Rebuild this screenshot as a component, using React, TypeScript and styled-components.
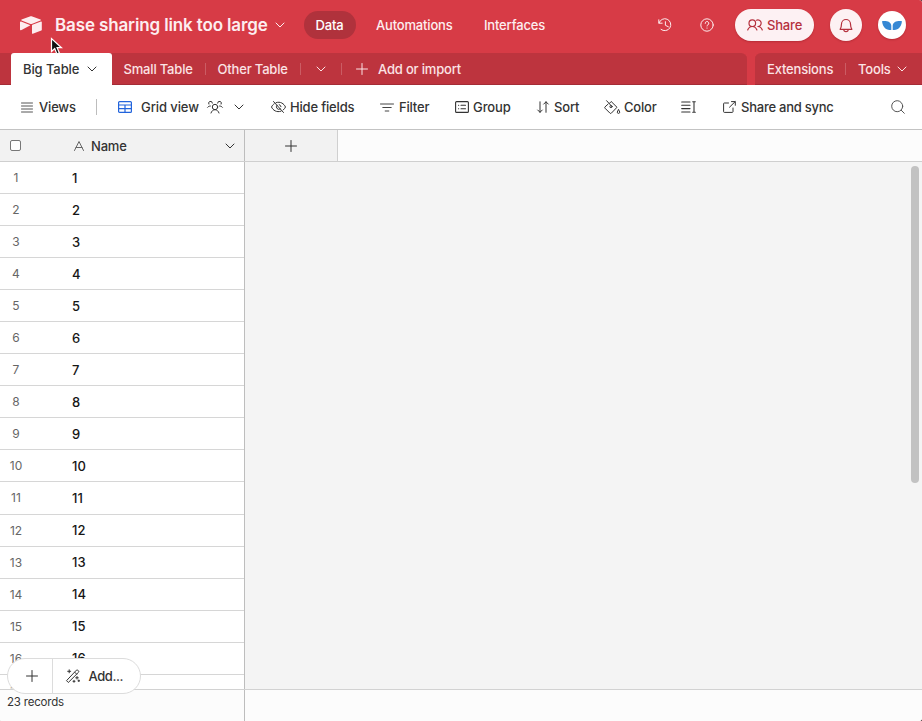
import React from "react";
import styled, { createGlobalStyle } from "styled-components";

const Global = createGlobalStyle`
  * { box-sizing: border-box; }
  html, body { margin: 0; padding: 0; background: #4a3436; }
  body { font-family: Inter, "Liberation Sans", sans-serif; font-size: 13px; color: #333; overflow: hidden; }
`;

const Window = styled.div`
  display: flex;
  flex-direction: column;
  width: 922px;
  height: 721px;
  overflow: hidden;
  background: #fff;
  border-radius: 0 3px 3px 1px;
`;

const TopBar = styled.header`
  display: flex;
  align-items: center;
  height: 53px;
  padding: 0 16px 3px 20px;
  background: #d73b46;
  color: #fdeef0;
`;

const Label = styled.span<{ $w: number; $ls?: number; $gap?: number; $weight?: number }>`
  flex: none;
  width: ${(p) => p.$w}px;
  margin-left: ${(p) => p.$gap ?? 0}px;
  letter-spacing: ${(p) => p.$ls ?? -0.18}px;
  font-weight: ${(p) => p.$weight ?? 500};
  line-height: 18px;
  white-space: nowrap;
`;

const BaseTitle = styled(Label)`
  font-size: 17px;
  line-height: 24px;
`;

const Icon = styled.svg<{ $gap?: number }>`
  flex: none;
  display: block;
  margin-left: ${(p) => p.$gap ?? 0}px;
  fill: none;
  stroke: currentColor;
  stroke-linecap: round;
  stroke-linejoin: round;
  overflow: visible;
`;

const NavPill = styled.div`
  display: flex;
  align-items: center;
  width: 52px;
  height: 28px;
  margin-left: 19px;
  padding-left: 11.5px;
  border-radius: 14px;
  background: #b0323c;
  color: #fff;
`;

const Spacer = styled.div`
  flex: 1;
`;

const ShareButton = styled.div`
  display: flex;
  align-items: center;
  width: 79px;
  height: 32px;
  margin-left: 21px;
  padding-left: 12px;
  border-radius: 16px;
  background: #fdf1f3;
  color: #b5303d;
  box-shadow: 0 1px 2px rgba(90, 0, 10, 0.25);
`;

const RoundButton = styled.div<{ $size: number; $bg: string }>`
  display: flex;
  align-items: center;
  justify-content: center;
  width: ${(p) => p.$size}px;
  height: ${(p) => p.$size}px;
  margin-left: 16px;
  border-radius: 50%;
  background: ${(p) => p.$bg};
  color: #b5303d;
  box-shadow: 0 1px 2px rgba(90, 0, 10, 0.25);
`;

const TabBar = styled.nav`
  display: flex;
  gap: 8px;
  height: 32px;
  background: #d73b46;
`;

const TabStrip = styled.div<{ $w: number; $pad: number; $radius: string }>`
  display: flex;
  align-items: center;
  width: ${(p) => p.$w}px;
  height: 32px;
  padding-left: ${(p) => p.$pad}px;
  border-radius: ${(p) => p.$radius};
  background: #bd343e;
  color: #fbe3e5;
  box-shadow: inset 0 -1px 0 #a42c36;
`;

const ActiveTab = styled.div`
  display: flex;
  align-items: center;
  width: 101px;
  height: 32px;
  padding-left: 12px;
  border-radius: 3px 3px 0 0;
  background: #fff;
  color: #333;
`;

const Divider = styled.i<{ $gap: number; $h?: number; $color?: string }>`
  flex: none;
  width: 1px;
  height: ${(p) => p.$h ?? 12}px;
  margin-left: ${(p) => p.$gap}px;
  background: ${(p) => p.$color ?? "#cb5c64"};
`;

const Toolbar = styled.div`
  display: flex;
  align-items: center;
  height: 45px;
  padding: 0 17px 0 21px;
  border-bottom: 1px solid #c3c3c3;
  background: #fff;
  color: #333;
`;

const HeaderRow = styled.div`
  display: flex;
  height: 32px;
  border-bottom: 1px solid #cfcfcf;
  background: #fcfcfc;
`;

const NameHeader = styled.div`
  display: flex;
  align-items: center;
  width: 245px;
  padding-left: 10px;
  border-right: 1px solid #bdbdbd;
  background: #f2f2f2;
`;

const AddField = styled.div`
  display: flex;
  align-items: center;
  justify-content: center;
  width: 93px;
  border-right: 1px solid #d0d0d0;
  background: #f2f2f2;
`;

const Checkbox = styled.span`
  width: 11px;
  height: 11px;
  border: 1px solid #777;
  border-radius: 2px;
  background: #fff;
`;

const GridBody = styled.main`
  display: flex;
  justify-content: space-between;
  height: 527px;
  background: #f4f4f4;
  overflow: hidden;
`;

const Rows = styled.div`
  width: 245px;
  border-right: 1px solid #bdbdbd;
  background: #fff;
`;

const Row = styled.div`
  display: flex;
  align-items: center;
  height: 32.05px;
  border-bottom: 1px solid #d6d6d6;
`;

const RowNumber = styled.span`
  width: 32px;
  text-align: center;
  font-size: 12px;
  color: #666;
`;

const Cell = styled.span`
  margin-left: 40px;
  color: #161616;
  font-weight: 500;
`;

const Scrollbar = styled.div`
  width: 8px;
  height: 317px;
  margin: 4px 3px 0 0;
  border-radius: 4px;
  background: #c2c2c2;
`;

const Footer = styled.footer`
  display: flex;
  height: 32px;
  border-top: 1px solid #d2d2d2;
  background: #fcfcfc;
`;

const RecordCount = styled.div`
  width: 245px;
  padding: 5px 0 0 7px;
  border-right: 1px solid #bdbdbd;
  font-size: 11.5px;
  letter-spacing: -0.2px;
  line-height: 15px;
`;

const AddPill = styled.div`
  position: absolute;
  left: 7px;
  top: 658px;
  display: flex;
  width: 134px;
  height: 36px;
  border: 1px solid #dcdcdc;
  border-radius: 18px;
  background: #fff;
  color: #333;
`;

const AddPart = styled.div<{ $w: number; $line?: boolean; $pad: number }>`
  display: flex;
  align-items: center;
  width: ${(p) => p.$w}px;
  padding-left: ${(p) => p.$pad}px;
  border-right: ${(p) => (p.$line ? "1px solid #dcdcdc" : "none")};
`;

const Pointer = styled.svg`
  position: absolute;
  left: 50px;
  top: 37px;
`;

const Chevron = ({ gap }: { gap: number }) => (
  <Icon $gap={gap} width="10" height="6" viewBox="0 0 10 6" strokeWidth="1">
    <path d="M1 1l4 4 4-4" />
  </Icon>
);

const Plus = ({ gap = 0 }: { gap?: number }) => (
  <Icon $gap={gap} width="12" height="12" viewBox="0 0 12 12" strokeWidth="1">
    <path d="M6 .5v11M.5 6h11" />
  </Icon>
);

const rows = Array.from({ length: 17 }, (_, i) => i + 1);

export default function App() {
  return (
    <Window>
      <Global />
      <TopBar>
        <Icon width="22" height="18" viewBox="0 0 22 18">
          <g fill="currentColor" stroke="none">
            <path d="M9.8.4 1.6 3.5c-.5.2-.5.8 0 1l8.2 3.2c.8.3 1.7.3 2.5 0l8.2-3.2c.5-.2.5-.8 0-1L12.3.4C11.5.1 10.6.1 9.8.4Z" />
            <path d="M12 9.2v8c0 .4.4.7.8.5l8.5-3.3c.3-.1.5-.3.5-.6V6c0-.4-.4-.7-.8-.5l-8.6 3.2c-.2.1-.4.3-.4.5Z" />
            <path d="M10 9.5 2 13.8l-1.1.4c-.4.2-.9-.1-.9-.6V6.2c0-.5.5-.8 1-.6l8.9 3.5c.3.1.3.3.1.4Z" />
          </g>
        </Icon>
        <BaseTitle $w={213} $gap={13} $weight={600} $ls={-0.13}>Base sharing link too large</BaseTitle>
        <Chevron gap={7} />
        <NavPill><Label $w={28}>Data</Label></NavPill>
        <Label $w={76} $gap={20}>Automations</Label>
        <Label $w={61} $gap={32}>Interfaces</Label>
        <Spacer />
        <Icon width="14" height="14" viewBox="0 0 14 14" strokeWidth="1">
          <path d="M.8 1.8v3.4h3.4M1 5A6 6 0 1 1 3 11.4M7.4 3.7v3.6l3 1.5" />
        </Icon>
        <Icon $gap={28} width="14" height="14" viewBox="0 0 14 14" strokeWidth="1">
          <circle cx="7" cy="7" r="6.2" />
          <path d="M5.2 5.4a1.8 1.8 0 1 1 2.7 1.5c-.6.3-.9.6-.9 1.1M7 10v.2" />
        </Icon>
        <ShareButton>
          <Icon width="16" height="12" viewBox="0 0 16 12" strokeWidth="1.2">
            <circle cx="5.3" cy="4.2" r="3.3" />
            <path d="M.7 11c.8-2.1 2.6-3.5 4.6-3.5s3.8 1.4 4.6 3.5M9.5 1.2a3.3 3.3 0 1 1 1.4 6.3c2 0 3.6 1.3 4.4 3.5" />
          </Icon>
          <Label $w={35} $gap={4}>Share</Label>
        </ShareButton>
        <RoundButton $size={32} $bg="#fdf1f3">
          <Icon width="14" height="15" viewBox="0 0 14 15" strokeWidth="1.2">
            <path d="M2.5 6a4.5 4.5 0 0 1 9 0c0 3 .8 4.3 1.4 5.3H1.1C1.7 10.3 2.5 9 2.5 6ZM4.8 11.5a2.2 2.2 0 0 0 4.4 0" />
          </Icon>
        </RoundButton>
        <RoundButton $size={28} $bg="#fff">
          <Icon width="20" height="11" viewBox="0 0 20 11">
            <path fill="#3688d4" stroke="none" d="M0 1.2c4-.7 9 .2 9.3 4.5V10C5 10 1 8.5 0 1.2ZM20 1.2c-4-.7-9 .2-9.3 4.5V10C15 10 19 8.5 20 1.2Z" />
          </Icon>
        </RoundButton>
      </TopBar>

      <TabBar>
        <TabStrip $w={747} $pad={11} $radius="0 6px 0 0">
          <ActiveTab>
            <Label $w={57} $ls={-0.1}>Big Table</Label>
            <Chevron gap={7} />
          </ActiveTab>
          <Label $w={70} $gap={11.5}>Small Table</Label>
          <Divider $gap={11.5} />
          <Label $w={71} $gap={11.5}>Other Table</Label>
          <Divider $gap={11.5} />
          <Chevron gap={15} />
          <Divider $gap={15} />
          <Plus gap={14} />
          <Label $w={84} $gap={10}>Add or import</Label>
        </TabStrip>
        <TabStrip $w={167} $pad={12} $radius="6px 0 0 0">
          <Label $w={66}>Extensions</Label>
          <Divider $gap={12} />
          <Label $w={33} $gap={12}>Tools</Label>
          <Chevron gap={6} />
        </TabStrip>
      </TabBar>

      <Toolbar>
        <Icon width="12" height="11" viewBox="0 0 12 11" strokeWidth="1" color="#555">
          <path d="M.5 1h11M.5 4h11M.5 7h11M.5 10h11" />
        </Icon>
        <Label $w={37} $gap={6}>Views</Label>
        <Divider $gap={20} $h={16} $color="#bdbdbd" />
        <Icon $gap={21} width="14" height="12" viewBox="0 0 14 12" strokeWidth="1.2" color="#2264dc">
          <rect x=".6" y=".6" width="12.8" height="10.8" rx="1" />
          <path d="M.6 4h12.8M.6 7.7h12.8M7 4v7.4" />
        </Icon>
        <Label $w={58} $gap={9} $ls={-0.08}>Grid view</Label>
        <Icon $gap={8} width="16" height="13" viewBox="0 0 16 13" strokeWidth="1">
          <circle cx="8" cy="6" r="2.7" />
          <path d="M4 12c.6-2 2.2-3.3 4-3.3s3.4 1.3 4 3.3M.6 6.3C1.3 5.5 2.2 5 3.4 5M1.8 3.1a1.9 1.9 0 1 1 3.6-1M15.4 6.3c-.7-.8-1.6-1.3-2.8-1.3M14.2 3.1a1.9 1.9 0 1 0-3.6-1" />
        </Icon>
        <Chevron gap={11} />
        <Icon $gap={27} width="15" height="12" viewBox="0 0 15 12" strokeWidth="1">
          <path d="M2.5.5l10 11M5 1.7C9.5 0 13 2.8 14.5 6c-.6 1.2-1.3 2.2-2.3 3M10 10.2C5.5 11.8 2 9.2.5 6c.6-1.3 1.5-2.4 2.7-3.2M6 4.2a2.5 2.5 0 0 0 3.3 3.7M8.2 3.6A2.5 2.5 0 0 1 10 5.7" />
        </Icon>
        <Label $w={65} $gap={4}>Hide fields</Label>
        <Icon $gap={25} width="14" height="9" viewBox="0 0 14 9" strokeWidth="1" color="#444">
          <path d="M.5 1h13M2.8 4.5h8.4M5.2 8h3.6" />
        </Icon>
        <Label $w={31} $gap={5}>Filter</Label>
        <Icon $gap={25} width="14" height="12" viewBox="0 0 14 12" strokeWidth="1.1">
          <rect x=".6" y=".6" width="12.8" height="10.8" rx="1" />
          <path d="M3.5 4.2h.2M6 4.2h4.5M3.5 7.7h.2M6 7.7h4.5" />
        </Icon>
        <Label $w={39} $gap={4} $ls={-0.08}>Group</Label>
        <Icon $gap={25} width="12" height="12" viewBox="0 0 12 12" strokeWidth="1">
          <path d="M3 .8v10.5M.7 9 3 11.3 5.3 9M9 11.3V.8M6.7 3.1 9 .8l2.3 2.3" />
        </Icon>
        <Label $w={26} $gap={5}>Sort</Label>
        <Icon $gap={24} width="16" height="15" viewBox="0 0 16 15" strokeWidth="1">
          <path d="M2.6.7 7 5.5M5.3 3.5 7.2 1.5 13 7.3 7.3 13.2c-.4.4-.9.4-1.3 0L1 8.2c-.4-.4-.4-.9 0-1.3l3-2.7M14.5 9.7c.6.9 1.2 1.7 1.2 2.5a1.2 1.2 0 0 1-2.4 0c0-.8.6-1.6 1.2-2.5" />
          <circle cx="7" cy="6.6" r="1.1" />
        </Icon>
        <Label $w={34} $gap={4}>Color</Label>
        <Icon $gap={23} width="16" height="12" viewBox="0 0 16 12" strokeWidth="1.1">
          <path d="M.7 1h8.3M.7 4.3h8.3M.7 7.6h8.3M.7 11h8.3M13 1v10M11.7.8h2.6M11.7 11.2h2.6" />
        </Icon>
        <Icon $gap={26} width="13" height="12" viewBox="0 0 13 12" strokeWidth="1">
          <path d="M5.5 2H1.3a.7.7 0 0 0-.7.7v8c0 .4.3.7.7.7h8c.4 0 .7-.3.7-.7V7M8.5.6h3.8v3.7M6.5 6.2l5.6-5.5" />
        </Icon>
        <Label $w={94} $gap={5} $ls={-0.24}>Share and sync</Label>
        <Spacer />
        <Icon width="14" height="14" viewBox="0 0 14 14" strokeWidth="1" color="#555">
          <circle cx="6.2" cy="6.2" r="5.5" />
          <path d="M10.3 10.3 13.3 13.3" />
        </Icon>
      </Toolbar>

      <HeaderRow>
        <NameHeader>
          <Checkbox />
          <Icon $gap={53} width="10" height="10" viewBox="0 0 10 10" strokeWidth="1" color="#666">
            <path d="M.5 9.5 5 .5l4.5 9M2 6.5h6" />
          </Icon>
          <Label $w={36} $gap={7}>Name</Label>
          <Chevron gap={98} />
        </NameHeader>
        <AddField><Plus /></AddField>
      </HeaderRow>

      <GridBody>
        <Rows>
          {rows.map((n) => (
            <Row key={n}>
              <RowNumber>{n}</RowNumber>
              <Cell>{n}</Cell>
            </Row>
          ))}
        </Rows>
        <Scrollbar />
      </GridBody>

      <Footer>
        <RecordCount>23 records</RecordCount>
      </Footer>

      <AddPill>
        <AddPart $w={45} $pad={18} $line><Plus /></AddPart>
        <AddPart $w={87} $pad={13}>
          <Icon width="14" height="14" viewBox="0 0 14 14" strokeWidth="1">
            <path d="M.8 11.4 10.4 1.2c.4-.4 1-.4 1.4 0l.7.7c.4.4.4 1 0 1.4L2.6 13.2ZM8.7 3.2l1.9 1.9M3.2.8v3M1.7 2.3h3M11 7.5v2.6M9.7 8.8h2.6M8 11.3v2M7 12.3h2M12.8 11v1.6M12 11.8h1.6" />
          </Icon>
          <Label $w={35} $gap={8.5} $ls={-0.4}>Add...</Label>
        </AddPart>
      </AddPill>

      <Pointer width="13" height="19" viewBox="0 0 13 19">
        <path d="M1.5 1.5v13l3.2-3 2.2 5.5 2.5-1.1-2.3-5.2h4.4Z" fill="#111" stroke="#fff" strokeWidth="1.2" />
      </Pointer>
    </Window>
  );
}
